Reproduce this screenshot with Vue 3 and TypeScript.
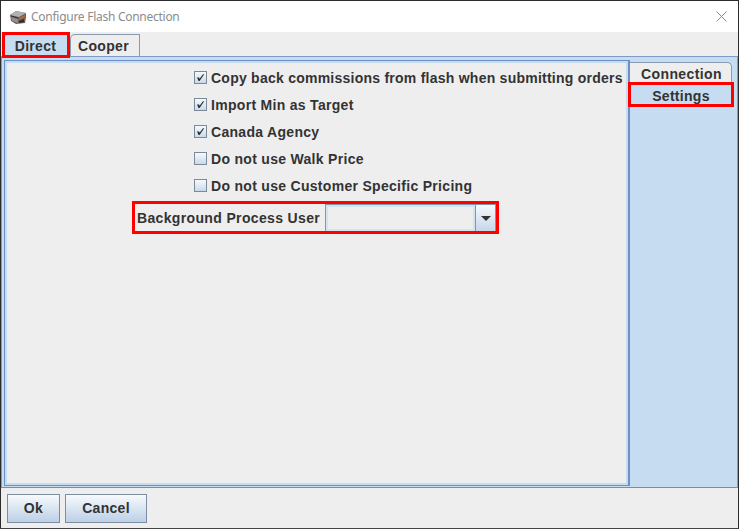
<script setup lang="ts">
const checks = [
  { label: 'Copy back commissions from flash when submitting orders', on: true, tight: true },
  { label: 'Import Min as Target', on: true, tight: false },
  { label: 'Canada Agency', on: true, tight: false },
  { label: 'Do not use Walk Price', on: false, tight: false },
  { label: 'Do not use Customer Specific Pricing', on: false, tight: false },
]
</script>

<template>
  <div class="window">
    <header class="title">
      <svg class="logo" width="16" height="14" viewBox="0 0 16 14">
        <path d="M0 5 6 1l10 2v4l-1 6-9 1-5-3z" fill="#6f5f55" />
        <path d="M0 5 6 1l10 2-7 4z" fill="#aeb2b6" />
        <path d="M1 7l7 2v4l-6-2z" fill="#8d8f92" />
        <path d="M9 8l6-3v2l-6 3z" fill="#b5673a" />
        <path d="M9 11l5-2v3l-5 1z" fill="#2f2d2e" />
        <path d="M1 6l7 2" stroke="#3a2f2b" stroke-width="1" fill="none" />
      </svg>
      <span class="title-text">Configure Flash Connection</span>
      <svg class="close" width="11" height="11" viewBox="0 0 11 11">
        <path d="M.5.5l10 10M10.5.5l-10 10" stroke="#8a8a8a" fill="none" />
      </svg>
    </header>

    <div class="tabs-top">
      <div class="tab tab-active">Direct</div>
      <div class="tab tab-idle">Cooper</div>
    </div>

    <div class="pane">
      <main class="inner">
        <div class="form">
          <label v-for="c in checks" :key="c.label" class="check-row">
            <span class="box">
              <svg v-if="c.on" width="11" height="11" viewBox="0 0 11 11">
                <path d="M2 5.5 4 5.5 4.6 6.8 8 2.2 9.2 2.2 4.6 9 3.6 9z" fill="#2a2a2a" />
              </svg>
            </span>
            <span :class="{ tight: c.tight }">{{ c.label }}</span>
          </label>
          <div class="user-row">
            <span>Background Process User</span>
            <div class="combo">
              <div class="combo-field"></div>
              <div class="combo-btn"><i class="caret"></i></div>
            </div>
          </div>
        </div>
      </main>
      <aside class="side">
        <div class="vtab vtab-idle">Connection</div>
        <div class="vtab vtab-active">Settings</div>
      </aside>
    </div>

    <footer class="actions">
      <button class="btn btn-ok">Ok</button>
      <button class="btn btn-cancel">Cancel</button>
    </footer>

    <i class="mark mark-direct"></i>
    <i class="mark mark-settings"></i>
    <i class="mark mark-user"></i>
  </div>
</template>

<style>
html, body { margin: 0; background: #eeeeee; }
</style>

<style scoped>
.window {
  position: relative;
  box-sizing: border-box;
  width: 739px;
  height: 529px;
  display: flex;
  flex-direction: column;
  background: #eeeeee;
  border: 1px solid #2c2c2c;
  border-bottom-color: #444;
  font-family: "Liberation Sans", Arial, sans-serif;
  font-size: 14px;
  font-weight: 700;
  color: #333333;
  letter-spacing: 0.3px;
}
.title {
  height: 31px;
  flex: none;
  display: flex;
  align-items: center;
  background: #ffffff;
  padding: 0 10px 0 9px;
  gap: 5px;
}
.title-text {
  font-family: "Noto Sans", sans-serif;
  font-weight: 400;
  font-size: 12px;
  color: #8c8c8c;
  letter-spacing: -0.27px;
}
.close { margin-left: auto; margin-right: 1px; }
.tabs-top {
  height: 24px;
  flex: none;
  display: flex;
  align-items: flex-end;
  padding-left: 2px;
  gap: 1px;
}
.tab {
  box-sizing: border-box;
  height: 22px;
  display: flex;
  align-items: center;
  justify-content: center;
  border: 1px solid #8a9bb0;
  border-bottom: 0;
  border-top-left-radius: 5px;
}
.tab-active { width: 66px; background: #c6dcf1; padding-right: 1px; }
.tab-idle { width: 70px; background: #eeeeee; padding-right: 3px; }
.pane {
  flex: 1;
  min-height: 0;
  display: flex;
  background: #c6dcf1;
  border: 1px solid #7f9ac4;
  border-bottom-color: #7a8ca6;
}
.inner {
  box-sizing: border-box;
  width: 626px;
  margin: 3px 0 1px 2px;
  background: #eeeeee;
  border: 1px solid #6f8fc4;
  border-right: 2px solid #6f8fc4;
  box-shadow: inset 0 0 0 2px #c6dcf0;
  display: flex;
  justify-content: flex-end;
  padding: 3px 6px 0 0;
}
.form {
  width: 491px;
  display: flex;
  flex-direction: column;
  align-items: flex-start;
}
.check-row {
  height: 27px;
  display: flex;
  align-items: center;
  gap: 4px;
  margin-left: 63px;
  white-space: nowrap;
}
.tight { letter-spacing: 0.245px; }
.box {
  box-sizing: border-box;
  width: 13px;
  height: 13px;
  border: 1px solid #7a8a99;
  background: linear-gradient(#f6f9fc, #c9d9ea);
  display: flex;
  align-items: center;
  justify-content: center;
}
.user-row {
  height: 28px;
  display: flex;
  align-items: center;
  gap: 5px;
  margin-top: 5px;
  margin-left: 6px;
  white-space: nowrap;
  letter-spacing: 0.35px;
}
.combo {
  box-sizing: border-box;
  width: 171px;
  height: 28px;
  display: flex;
  border: 1px solid #8296aa;
}
.combo-field {
  flex: 1;
  background: #eeeeee;
  border: 2px solid #d4e3f2;
}
.combo-btn {
  width: 19px;
  border-left: 1px solid #8296aa;
  background: linear-gradient(#f6f9fc, #c5d7ea);
  display: flex;
  align-items: center;
  justify-content: center;
}
.caret {
  width: 0;
  height: 0;
  border-left: 5px solid transparent;
  border-right: 5px solid transparent;
  border-top: 5px solid #333;
}
.vtab {
  display: flex;
  align-items: center;
  justify-content: center;
  box-sizing: border-box;
  height: 22px;
}
.side { flex: 1; padding: 5px 5px 0 0; display: flex; flex-direction: column; }
.vtab-idle { background: #eeeeee; border: 1px solid #8a9bb0; border-left: 0; border-bottom: 0; border-top-right-radius: 5px; letter-spacing: 0.4px; padding-left: 2px; }
.vtab-active { background: #c6dcf1; height: 23px; }
.actions {
  height: 40px;
  flex: none;
  display: flex;
  align-items: center;
  gap: 5px;
  padding-left: 6px;
}
.btn {
  box-sizing: border-box;
  height: 29px;
  padding: 0;
  border: 1px solid #7d8ea0;
  background: linear-gradient(#f7fafd, #bcd0e6);
  font: inherit;
  color: inherit;
  letter-spacing: inherit;
}
.btn-ok { width: 53px; }
.btn-cancel { width: 82px; }
.mark {
  position: absolute;
  box-sizing: border-box;
  border: 3px solid #ff0000;
  pointer-events: none;
}
.mark-direct { left: 1px; top: 31px; width: 68px; height: 26px; }
.mark-settings { left: 627px; top: 81px; width: 106px; height: 25px; }
.mark-user { left: 131px; top: 200px; width: 367px; height: 33px; }
</style>
